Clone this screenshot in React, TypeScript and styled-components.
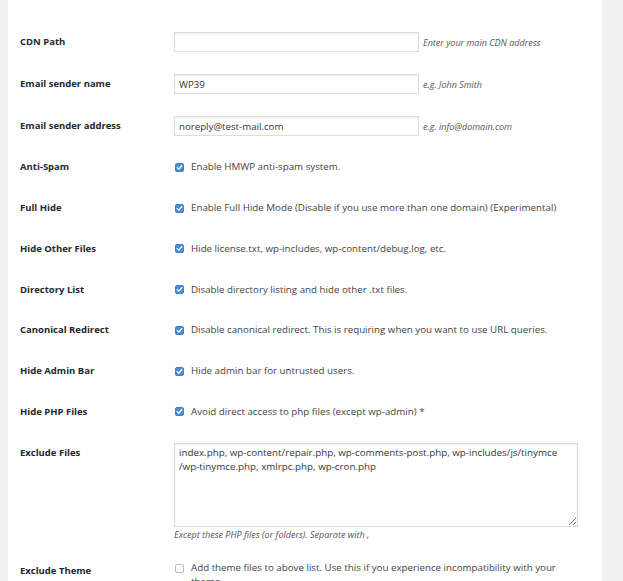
import React from "react";
import styled, { createGlobalStyle } from "styled-components";

const Global = createGlobalStyle`
  html, body { margin: 0; padding: 0; background: #f1f1f1; }
  body { font-family: "Open Sans", "Liberation Sans", sans-serif; color: #444; }
`;

const Panel = styled.div`
  margin-left: 8px;
  width: 594px;
  min-height: 581px;
  background: #fff;
  padding: 21px 0 0 12px;
  box-sizing: border-box;
  overflow: hidden;
`;

const Form = styled.div`
  display: grid;
  grid-template-columns: 154px 1fr;
`;

const Label = styled.div<{ $h: number; $top?: boolean }>`
  font-size: 9.5px;
  font-weight: 700;
  color: #23282d;
  height: ${(p) => p.$h}px;
  display: flex;
  align-items: ${(p) => (p.$top ? "flex-start" : "center")};
  padding-top: ${(p) => (p.$top ? "11px" : "0")};
  box-sizing: border-box;
  line-height: 20px;
`;

const Field = styled.div<{ $h: number; $top?: boolean }>`
  height: ${(p) => p.$h}px;
  display: flex;
  flex-direction: ${(p) => (p.$top ? "column" : "row")};
  align-items: ${(p) => (p.$top ? "flex-start" : "center")};
  padding-top: ${(p) => (p.$top ? "11px" : "0")};
  box-sizing: border-box;
`;

const TextInput = styled.input`
  width: 245px;
  height: 20px;
  box-sizing: border-box;
  border: 1px solid #ddd;
  box-shadow: inset 0 1px 2px rgba(0, 0, 0, 0.07);
  padding: 0 4px;
  font-family: "Open Sans", "Liberation Sans", sans-serif;
  font-size: 9.7px;
  color: #32373c;
  outline: none;
  margin: 0;
`;

const Desc = styled.span`
  font-style: italic;
  font-size: 9px;
  color: #555;
  margin-left: 4px;
`;

const BelowDesc = styled.div`
  font-style: italic;
  font-size: 9px;
  color: #555;
  line-height: 14px;
  margin-top: 1px;
`;

const CheckLabel = styled.label`
  display: flex;
  align-items: flex-start;
  gap: 7px;
  font-size: 9.75px;
  color: #444;
  line-height: 14px;
  width: 404px;
`;

const Box = styled.span<{ $on: boolean }>`
  flex: none;
  width: 9px;
  height: 9px;
  margin-top: 2.5px;
  margin-left: 1px;
  border-radius: 2px;
  box-sizing: border-box;
  background: ${(p) => (p.$on ? "#4a8fd8" : "#fff")};
  border: 1px solid ${(p) => (p.$on ? "#3f80c8" : "#b4b9be")};
  display: flex;
  align-items: center;
  justify-content: center;
`;

const Area = styled.textarea`
  width: 404px;
  height: 84px;
  box-sizing: border-box;
  border: 1px solid #ddd;
  box-shadow: inset 0 1px 2px rgba(0, 0, 0, 0.07);
  padding: 2px 4px;
  font-family: "Open Sans", "Liberation Sans", sans-serif;
  font-size: 9.8px;
  line-height: 13.5px;
  color: #32373c;
  margin: 0;
  outline: none;
  resize: vertical;
`;

const Check = ({ on }: { on: boolean }) => (
  <Box $on={on}>
    {on && (
      <svg width="7" height="7" viewBox="0 0 7 7">
        <path d="M1.2 3.6 L2.8 5.1 L5.8 1.8" fill="none" stroke="#fff" strokeWidth="1.3" strokeLinecap="round" strokeLinejoin="round" />
      </svg>
    )}
  </Box>
);

const inputs = [
  { label: "CDN Path", value: "", desc: "Enter your main CDN address" },
  { label: "Email sender name", value: "WP39", desc: "e.g. John Smith" },
  { label: "Email sender address", value: "noreply@test-mail.com", desc: "e.g. info@domain.com" },
];

const checks = [
  { label: "Anti-Spam", text: "Enable HMWP anti-spam system." },
  { label: "Full Hide", text: "Enable Full Hide Mode (Disable if you use more than one domain) (Experimental)" },
  { label: "Hide Other Files", text: "Hide license.txt, wp-includes, wp-content/debug.log, etc." },
  { label: "Directory List", text: "Disable directory listing and hide other .txt files." },
  { label: "Canonical Redirect", text: "Disable canonical redirect. This is requiring when you want to use URL queries." },
  { label: "Hide Admin Bar", text: "Hide admin bar for untrusted users." },
  { label: "Hide PHP Files", text: "Avoid direct access to php files (except wp-admin) *" },
];

export default function App() {
  return (
    <>
      <Global />
      <Panel>
        <Form>
          {inputs.map((r) => (
            <React.Fragment key={r.label}>
              <Label $h={42}>{r.label}</Label>
              <Field $h={42}>
                <TextInput defaultValue={r.value} />
                <Desc>{r.desc}</Desc>
              </Field>
            </React.Fragment>
          ))}
          {checks.map((r) => (
            <React.Fragment key={r.label}>
              <Label $h={40.75}>{r.label}</Label>
              <Field $h={40.75}>
                <CheckLabel>
                  <Check on />
                  <span>{r.text}</span>
                </CheckLabel>
              </Field>
            </React.Fragment>
          ))}
          <Label $h={118} $top>Exclude Files</Label>
          <Field $h={118} $top>
            <Area
              defaultValue={"index.php, wp-content/repair.php, wp-comments-post.php, wp-includes/js/tinymce\n/wp-tinymce.php, xmlrpc.php, wp-cron.php"}
            />
            <BelowDesc>Except these PHP files (or folders). Separate with ,</BelowDesc>
          </Field>
          <Label $h={40} $top>Exclude Theme</Label>
          <Field $h={40} $top>
            <CheckLabel>
              <Check on={false} />
              <span>Add theme files to above list. Use this if you experience incompatibility with your theme.</span>
            </CheckLabel>
          </Field>
        </Form>
      </Panel>
    </>
  );
}
